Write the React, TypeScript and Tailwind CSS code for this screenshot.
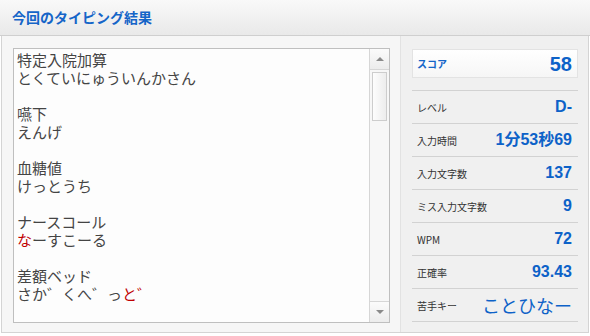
const entries: { kanji: string; kana: React.ReactNode }[] = [
  { kanji: "特定入院加算", kana: "とくていにゅういんかさん" },
  { kanji: "嚥下", kana: "えんげ" },
  { kanji: "血糖値", kana: "けっとうち" },
  {
    kanji: "ナースコール",
    kana: (
      <>
        <span className="text-[#c00000]">な</span>ーすこーる
      </>
    ),
  },
  {
    kanji: "差額ベッド",
    kana: (
      <>
        さか゛くへ゛っ<span className="text-[#c00000]">と゛</span>
      </>
    ),
  },
];

const stats = [
  { label: "レベル", value: "D-" },
  { label: "入力時間", value: "1分53秒69" },
  { label: "入力文字数", value: "137" },
  { label: "ミス入力文字数", value: "9" },
  { label: "WPM", value: "72" },
  { label: "正確率", value: "93.43" },
];

function Scrollbar() {
  return (
    <div className="flex w-[20px] flex-col border-l border-[#d6d6d6] bg-[#f7f7f7]">
      <div className="flex h-[21px] items-center justify-center border-b border-[#d6d6d6] bg-gradient-to-b from-[#fbfbfb] to-[#ececec]">
        <div className="h-0 w-0 border-x-[4px] border-b-[4px] border-x-transparent border-b-[#8a8a8a]" />
      </div>
      <div className="mx-[2px] mt-[2px] h-[49px] border border-[#cdcdcd] bg-gradient-to-r from-[#fdfdfd] to-[#ededed]" />
      <div className="flex-1" />
      <div className="flex h-[21px] items-center justify-center border-t border-[#d6d6d6] bg-gradient-to-b from-[#fbfbfb] to-[#ececec]">
        <div className="h-0 w-0 border-x-[4px] border-t-[4px] border-x-transparent border-t-[#8a8a8a]" />
      </div>
    </div>
  );
}

export default function App() {
  return (
    <div className="h-[336px] w-[590px] bg-white font-['Noto_Sans_CJK_JP',sans-serif]">
      <div className="flex h-[36px] items-center border-b border-[#cfcfcf] bg-gradient-to-b from-[#f9f9f9] to-[#e9e9e9] px-3">
        <h1 className="text-[14px] font-bold text-[#1565c8]">今回のタイピング結果</h1>
      </div>

      <div className="mx-px flex h-[297px] border-x border-b border-[#d4d4d4]">
        <div className="w-[398px] bg-[#f6f6f6] pl-[11px] pt-[12px]">
          <div className="flex h-[275px] w-[377px] border border-[#bfbfbf] bg-[#fdfdfd]">
            <div className="flex-1 pl-[3px] pt-[2px] text-[15px] leading-[18px] text-[#444]">
              {entries.map((e, i) => (
                <div key={i} className={i > 0 ? "mt-[18px]" : ""}>
                  <div>{e.kanji}</div>
                  <div>{e.kana}</div>
                </div>
              ))}
            </div>
            <Scrollbar />
          </div>
        </div>

        <div className="flex-1 border-l border-[#e2e2e2] bg-[#f0f0f0] pl-[11px] pr-[10px] pt-[13px]">
          <div className="flex h-[29px] items-center justify-between border border-[#e3e3e3] bg-gradient-to-b from-white to-[#f6f6f6] pl-[4px] pr-[5px]">
            <span className="text-[10px] font-bold text-[#1565c8]">スコア</span>
            <span className="font-['Liberation_Sans',sans-serif] text-[20px] font-bold text-[#0d62c8]">58</span>
          </div>

          <div className="mt-[12px] border-b border-[#d2d2d2]">
            {stats.map((s) => (
              <div
                key={s.label}
                className="flex h-[33px] items-center justify-between border-t border-[#d2d2d2] pl-[5px] pr-[6px]"
              >
                <span className="text-[10px] text-[#333]">{s.label}</span>
                <span className="font-['Liberation_Sans','Noto_Sans_CJK_JP',sans-serif] text-[16px] font-bold text-[#0d62c8]">
                  {s.value}
                </span>
              </div>
            ))}
            <div className="flex h-[33px] items-center justify-between border-t border-[#d2d2d2] pl-[5px] pr-[6px]">
              <span className="text-[10px] text-[#333]">苦手キー</span>
              <span className="text-[18px] leading-none text-[#0d62c8]">ことひなー</span>
            </div>
          </div>
        </div>
      </div>
    </div>
  );
}
